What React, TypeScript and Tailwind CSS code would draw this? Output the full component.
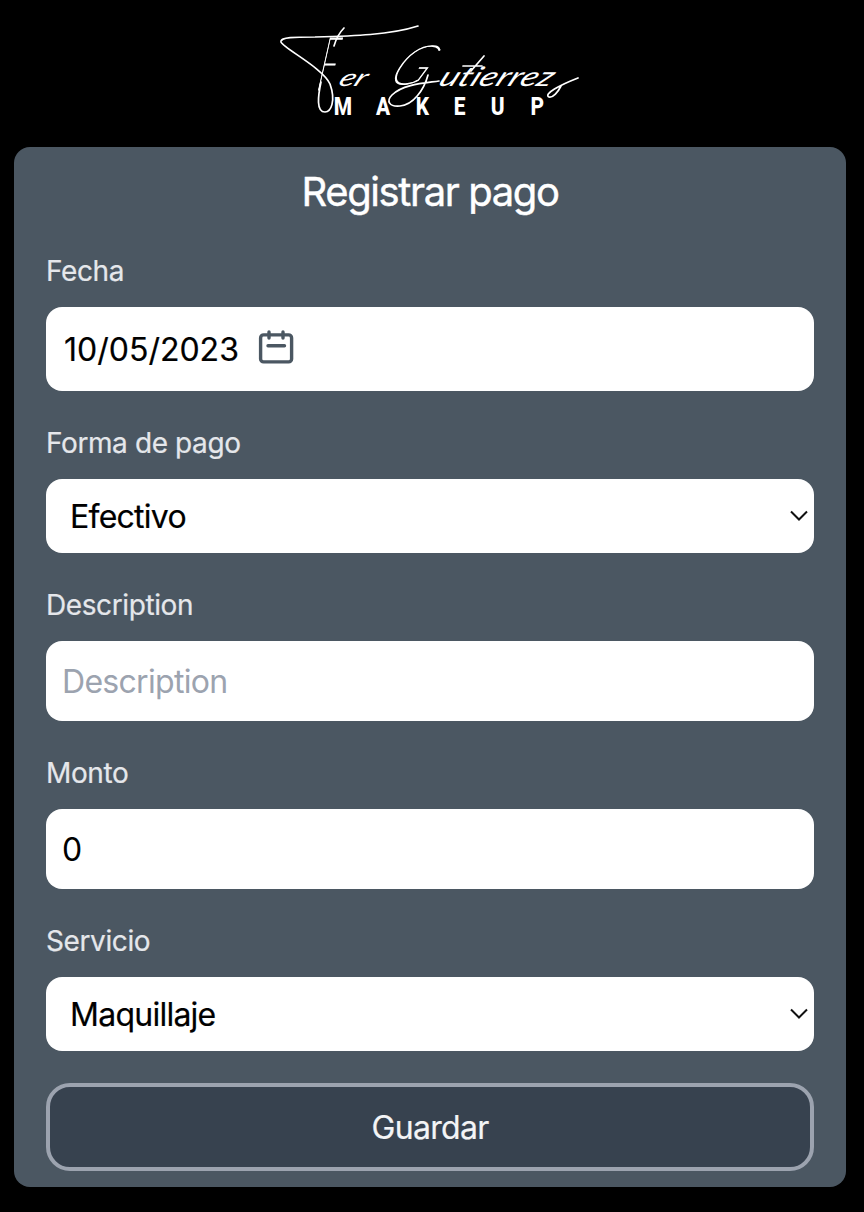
import type { ReactNode } from "react";

function Logo() {
  return (
    <svg
      className="block h-[147px] w-full"
      viewBox="0 0 864 147"
      fill="none"
      role="img"
      aria-label="Fer Gutierrez Makeup"
    >
      {/* Signature lettering */}
      <g fill="#fff" fontFamily="Lato, sans-serif" fontStyle="italic">
        <text
          transform="matrix(0.45 0 -0.17 1 316 90)"
          fontSize="74"
          fontWeight="100"
          stroke="#fff"
          strokeWidth="1.2"
        >
          F
        </text>
        <text transform="matrix(1.35 0 -0.5 1 337 86)" fontSize="24" fontWeight="400">
          er
        </text>
        <text
          transform="matrix(0.95 0 -0.62 1 386 84)"
          fontSize="54"
          fontWeight="100"
          stroke="#fff"
          strokeWidth="1.1"
        >
          G
        </text>
        <text
          transform="matrix(1.3 0 -0.5 1 437 86)"
          fontSize="27"
          fontWeight="400"
          letterSpacing="0.2"
        >
          utierrez
        </text>
      </g>
      {/* Pen flourishes */}
      <g stroke="#fff" strokeLinecap="round" strokeLinejoin="round" strokeWidth="1.7">
        <path d="M418 26C390 35 353 36 315 37C295 37 280 37 281 42C283 48 323 68 330 84C336 101 331 112 325 112C316 112 318 96 321 82" />
        <path d="M344 28C338 34 336 39 334 46" />
        <path d="M428 75C424 90 413 105 400 106C389 107 386 101 392 95C403 84 426 83 439 81" />
        <path d="M484 56L471 71M463 66H482" />
        <path d="M561 86C558 92 553 98 549 97C543 94 560 85 578 78" />
      </g>
      <g transform="scale(0.82 1)">
        <text
          x="407 458.5 507 553.5 598.5 647"
          y="115"
          fill="#fff"
          fontFamily="Roboto, sans-serif"
          fontSize="25.5"
          fontWeight="800"
        >
          MAKEUP
        </text>
      </g>
    </svg>
  );
}

function Field({ label, children }: { label: string; children: ReactNode }) {
  return (
    <label className="mb-8 flex flex-col gap-4">
      <span className="text-[28px] leading-10 tracking-[-0.4px] text-gray-200 [-webkit-text-stroke:0.2px_#e5e7eb]">
        {label}
      </span>
      {children}
    </label>
  );
}

function Select({ value }: { value: string }) {
  return (
    <span className="flex h-[74px] items-center justify-between rounded-2xl bg-white pr-1.5 pl-6 text-[32px] tracking-[-0.75px] text-black">
      <span className="pt-0.5 [-webkit-text-stroke:0.2px_black]">{value}</span>
      <svg className="h-3 w-[18px]" viewBox="0 0 18 12" fill="none" stroke="#111" strokeWidth="2">
        <path d="M1 1.5L9 9.5L17 1.5" />
      </svg>
    </span>
  );
}

export default function App() {
  return (
    <main className="min-h-[1212px] bg-black pr-[18px] pb-[25px] pl-[14px] font-['Inter',sans-serif]">
      <header className="-mr-[18px] -ml-[14px]">
        <Logo />
      </header>
      <section className="h-[1040px] rounded-2xl bg-[#4b5762] px-8 pt-[17px]">
        <h1 className="mb-[31px] text-center text-[40px] leading-14 tracking-[-1.4px] text-white [-webkit-text-stroke:0.4px_white]">
          Registrar pago
        </h1>
        <Field label="Fecha">
          <span className="flex h-[84px] items-center rounded-2xl bg-white pl-[18px] text-[32px] text-black">
            <span className="w-[194px] pt-0.5 [-webkit-text-stroke:0.2px_black]">10/05/2023</span>
            <svg
              className="mb-1 h-[34px] w-9"
              viewBox="0 0 36 34"
              fill="none"
              stroke="#4b5762"
              strokeWidth="3.4"
              strokeLinecap="round"
            >
              <rect x="2.6" y="4.9" width="31" height="27" rx="3" />
              <path d="M11 2V8M25 2V8M10 15.7H26.5" />
            </svg>
          </span>
        </Field>
        <Field label="Forma de pago">
          <Select value="Efectivo" />
        </Field>
        <Field label="Description">
          <input
            className="h-20 rounded-2xl bg-white px-4 text-[32px] tracking-[-0.7px] text-black placeholder:text-[#9ca3af]"
            placeholder="Description"
          />
        </Field>
        <Field label="Monto">
          <input
            className="h-20 rounded-2xl bg-white px-4 text-[32px] text-black"
            defaultValue="0"
          />
        </Field>
        <Field label="Servicio">
          <Select value="Maquillaje" />
        </Field>
        <button className="h-[88px] w-full rounded-3xl border-4 border-[#9ca3af] bg-[#37424f] pt-0.5 text-[32px] tracking-[-0.7px] text-gray-100 [-webkit-text-stroke:0.2px_#f3f4f6]">
          Guardar
        </button>
      </section>
    </main>
  );
}
